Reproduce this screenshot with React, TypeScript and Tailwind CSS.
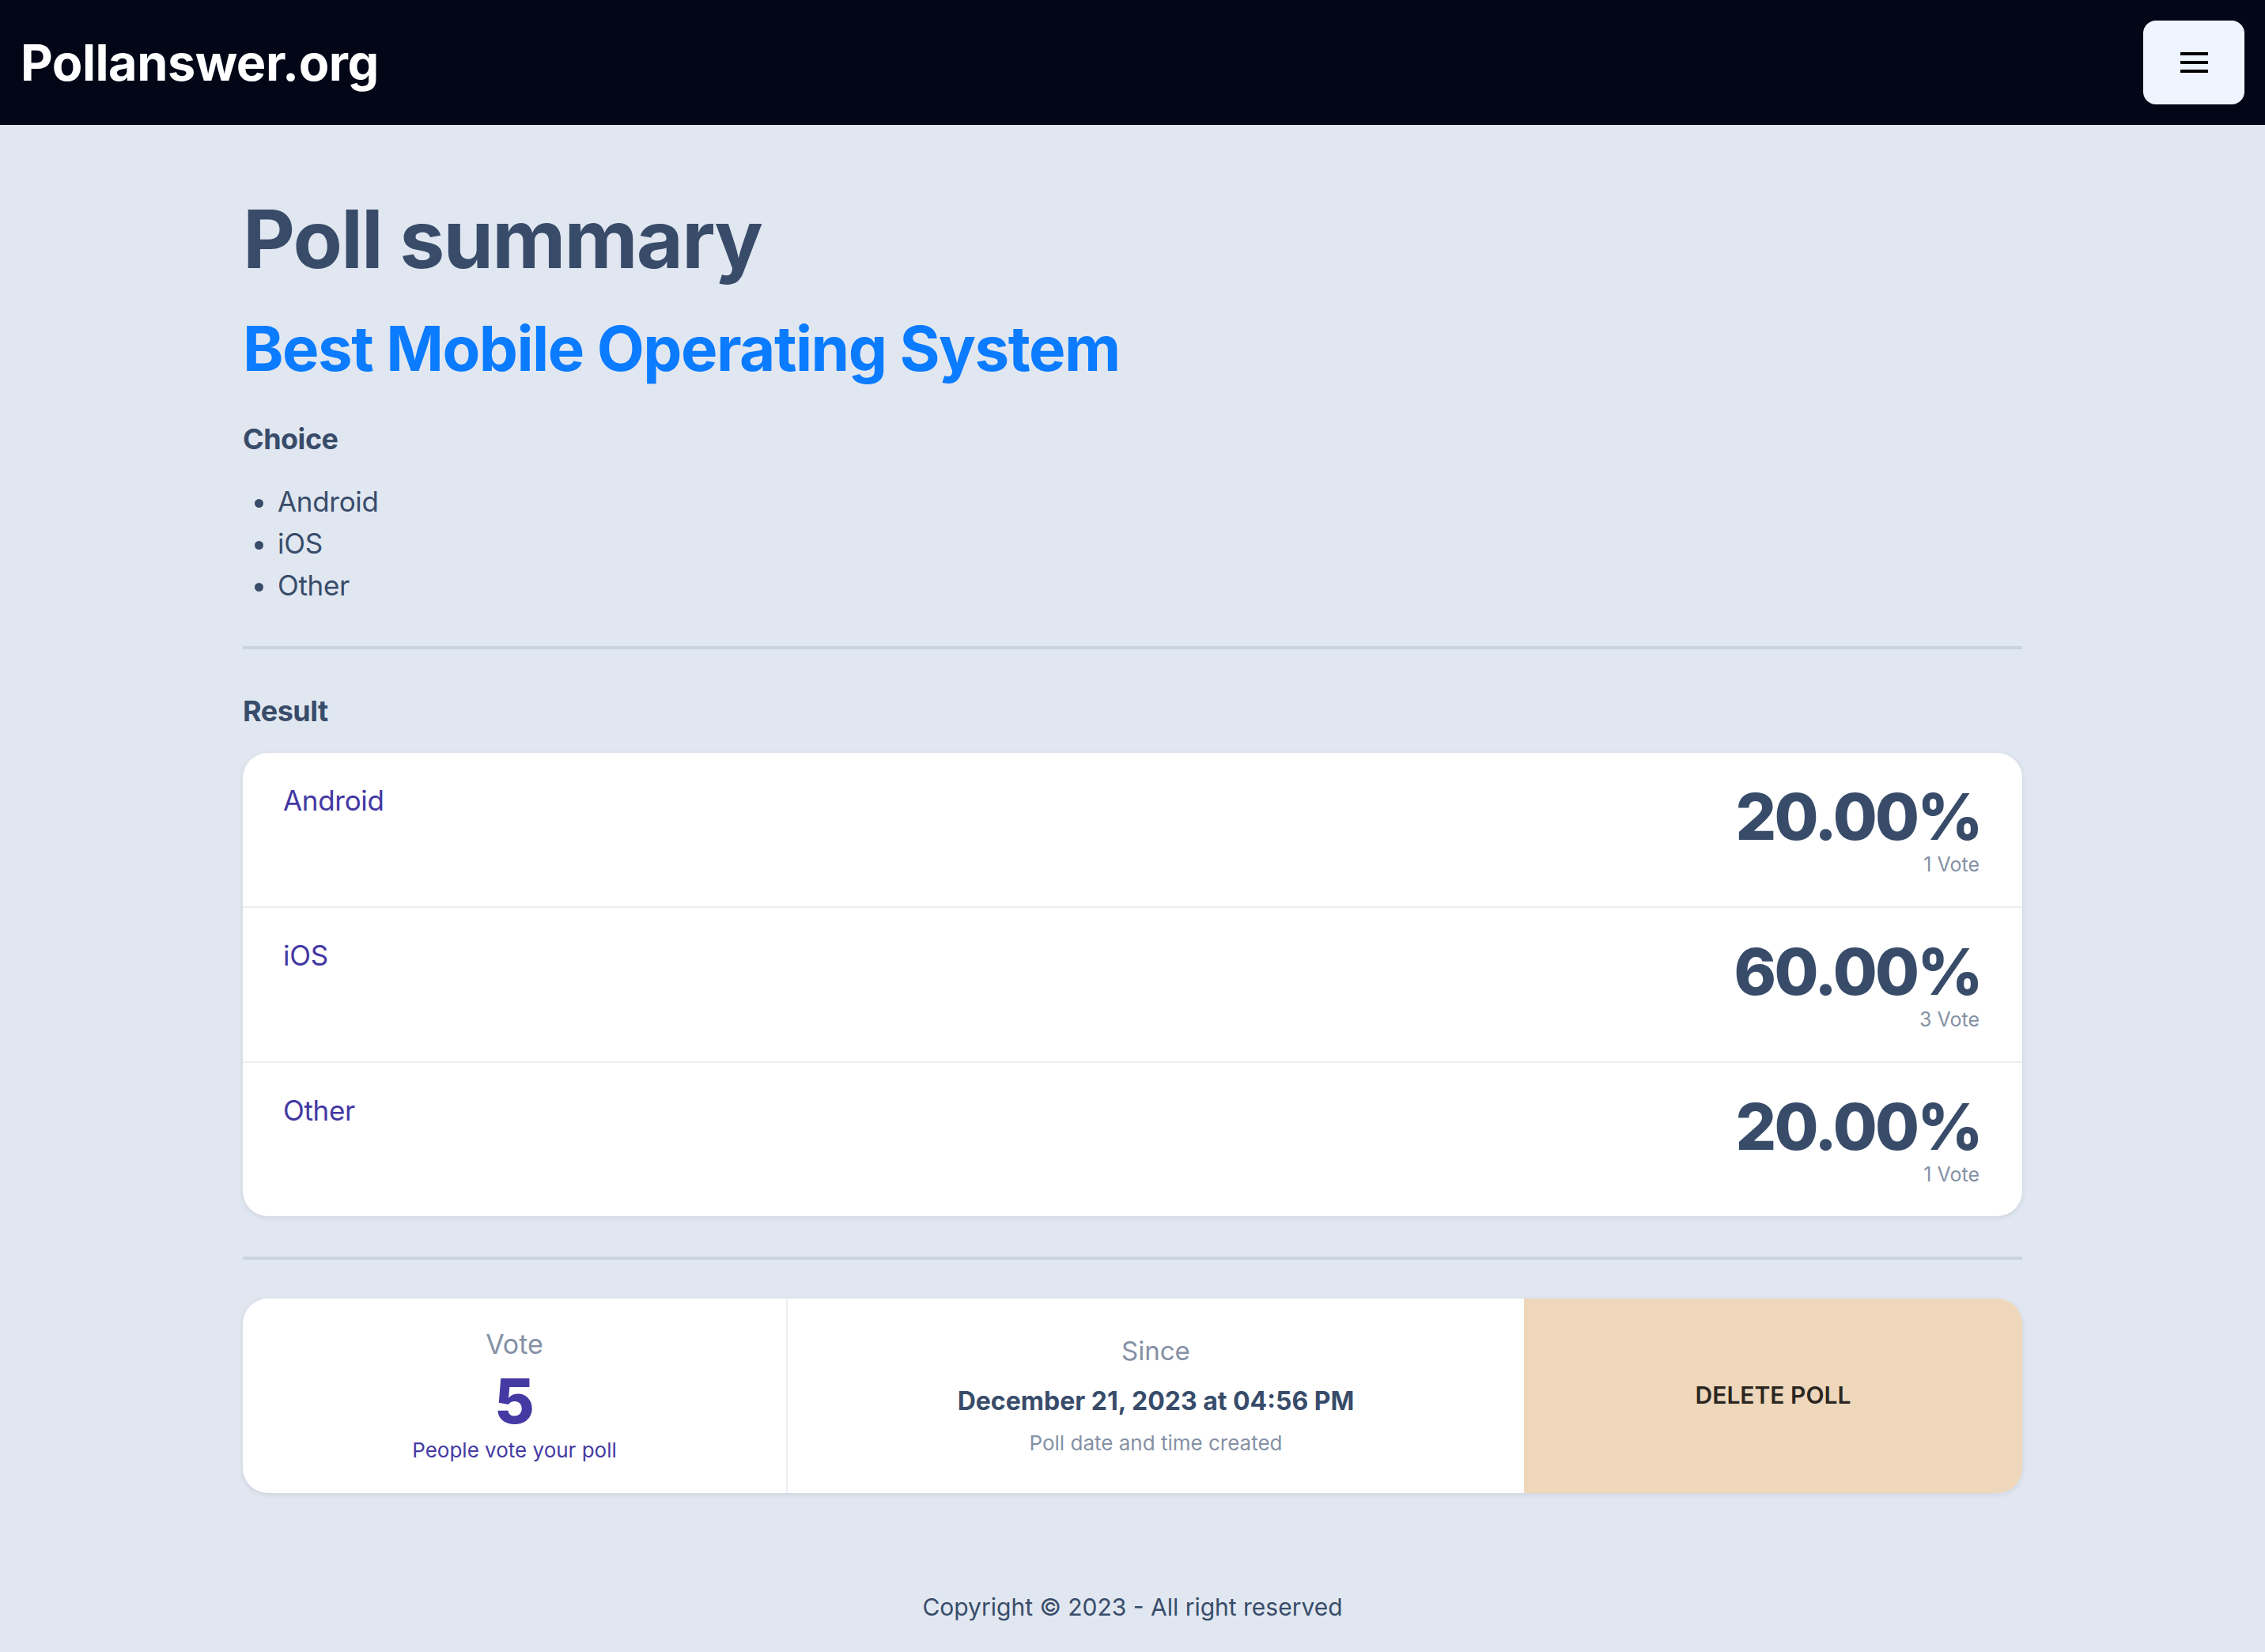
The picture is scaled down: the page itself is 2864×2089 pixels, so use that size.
import React from 'react';

const results = [
  { id: 'android', label: 'Android', percent: '20.00%', votes: '1 Vote' },
  { id: 'ios', label: 'iOS', percent: '60.00%', votes: '3 Vote' },
  { id: 'other', label: 'Other', percent: '20.00%', votes: '1 Vote' }
];

const choices = ['Android', 'iOS', 'Other'];

const Navbar: React.FC = () => (
  <nav className="bg-[#020617] h-[158px] flex items-center justify-between pl-[26px] pr-[26px]">
    <span className="text-white font-bold text-[63px] leading-none tracking-[-0.5px]">Pollanswer.org</span>
    <button className="w-[128px] h-[106px] rounded-[16px] bg-[#eef5ff] flex flex-col items-center justify-center gap-[7px]">
      <span className="block w-[35px] h-[4px] bg-black" />
      <span className="block w-[35px] h-[4px] bg-black" />
      <span className="block w-[35px] h-[4px] bg-black" />
    </button>
  </nav>
);

export default function App() {
  return (
    <div className="min-h-screen bg-[#e1e7f0] font-['Inter',sans-serif] text-[#384c6a]">
      <Navbar />

      <main className="w-[2250px] mx-auto flex flex-col">
        <h1 className="mt-[93px] text-[102px] leading-none font-bold tracking-[-1.8px]">Poll summary</h1>
        <h2 className="mt-[49px] text-[78px] leading-none font-bold text-[#0b7bff] tracking-[-1.5px]">
          Best Mobile Operating System
        </h2>

        <h3 className="mt-[57px] text-[36px] leading-none font-bold tracking-[-0.5px]">Choice</h3>
        <ul className="mt-[35px] list-disc pl-[44px] text-[35px] leading-[53px] tracking-[-0.3px]">
          {choices.map((c) => (
            <li key={c}>{c}</li>
          ))}
        </ul>

        <div className="mt-[50px] h-[4px] bg-[#cbd3de]" />

        <h3 className="mt-[60px] text-[36px] leading-none font-bold tracking-[-0.5px]">Result</h3>

        <div className="mt-[35px] bg-white rounded-[32px] shadow-[0_2px_6px_rgba(30,41,59,0.10)] overflow-hidden">
          {results.map((r, i) => (
            <div
              key={r.id}
              className={`flex justify-between pl-[51px] pr-[52px] pt-[41px] pb-[40px] ${
                i > 0 ? 'border-t-[2px] border-[#eceef1]' : ''
              }`}
            >
              <div className="text-[35px] leading-none text-[#4338a3] mt-[2px] tracking-[-0.3px]">{r.label}</div>
              <div className="flex flex-col items-end">
                <div className="text-[81px] leading-none font-extrabold tracking-[-2.7px]">{r.percent}</div>
                <div className="mt-[7px] mr-[2px] text-[25px] leading-none text-[#8591a5]">{r.votes}</div>
              </div>
            </div>
          ))}
        </div>

        <div className="mt-[51px] h-[4px] bg-[#cbd3de]" />

        <div className="mt-[49px] h-[246px] flex bg-white rounded-[32px] shadow-[0_2px_6px_rgba(30,41,59,0.10)] overflow-hidden">
          <div className="w-[687px] flex flex-col items-center justify-center">
            <div className="text-[34px] leading-none text-[#8591a5]">Vote</div>
            <div className="mt-[16px] text-[78px] leading-none font-extrabold text-[#453aa3]">5</div>
            <div className="mt-[10px] text-[26px] leading-none text-[#453aa3]">People vote your poll</div>
          </div>
          <div className="w-[933px] border-l-[2px] border-[#eceef1] flex flex-col items-center justify-center">
            <div className="text-[33px] leading-none text-[#8591a5]">Since</div>
            <div className="mt-[31px] text-[32px] leading-none font-bold">December 21, 2023 at 04:56 PM</div>
            <div className="mt-[24px] text-[26px] leading-none text-[#8591a5]">Poll date and time created</div>
          </div>
          <button className="flex-1 bg-[#efd7bc] flex items-center justify-center pb-[2px] text-[30px] leading-none font-semibold text-[#2b2620]">
            DELETE POLL
          </button>
        </div>

        <footer className="mt-[129px] pb-[43px] text-center text-[30px] leading-none">
          Copyright © 2023 - All right reserved
        </footer>
      </main>
    </div>
  );
}
